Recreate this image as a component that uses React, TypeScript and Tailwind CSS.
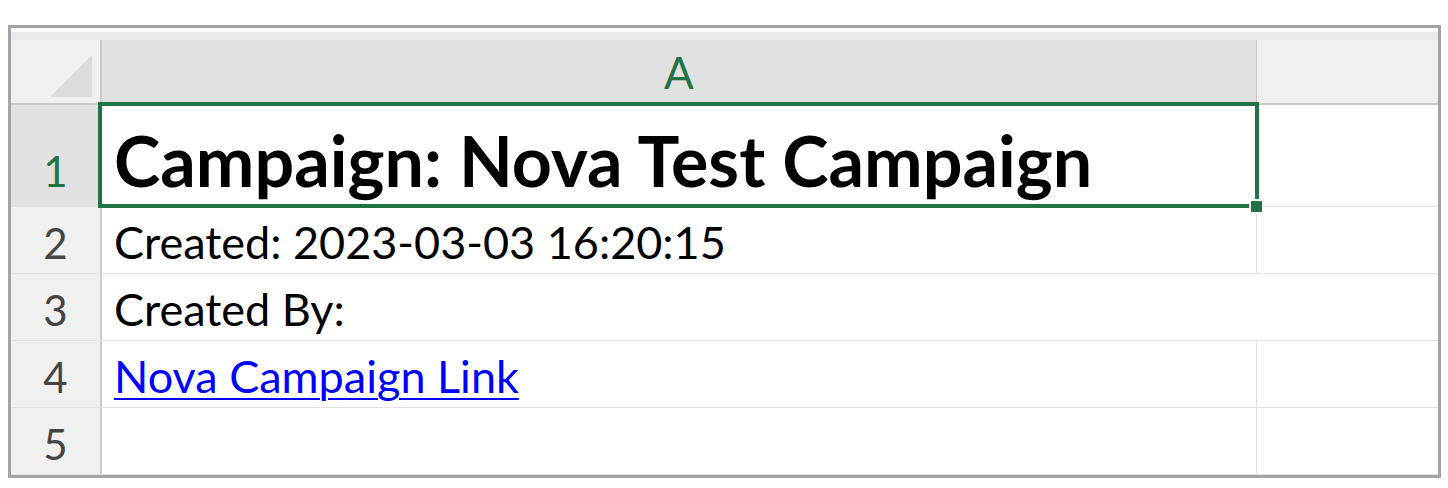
import React from 'react';

const font = { fontFamily: 'Lato, "Open Sans", sans-serif' };

type Row = {
    num: string;
    text?: string;
    link?: boolean;
    noSplit?: boolean;
};

const rows: Row[] = [
    { num: '2', text: 'Created: 2023-03-03 16:20:15' },
    { num: '3', text: 'Created By:', noSplit: true },
    { num: '4', text: 'Nova Campaign Link', link: true },
    { num: '5' },
];

const App: React.FC = () => {
    return (
        <div className="w-[1448px] h-[488px] bg-white pt-[25px] pl-[8px]" style={font}>
            <div className="w-[1433px] h-[453px] border-[3px] border-[#a3a3a3] bg-white overflow-hidden">
                {/* top strip */}
                <div className="h-[4px] bg-white" />
                <div className="h-[8px] bg-[#e8eaee]" />

                {/* column headers */}
                <div className="flex h-[65px]">
                    <div className="w-[91px] bg-[#f0f0f0] border-r-2 border-b-2 border-[#cacaca] flex items-end justify-end pr-[8px] pb-[6px]">
                        <svg width="42" height="42" viewBox="0 0 42 42">
                            <polygon points="42,0 42,42 0,42" fill="#dcdcdc" />
                        </svg>
                    </div>
                    <div className="w-[1155px] bg-[#e1e1e1] border-r border-[#c8c8c8] border-b-[3px] border-b-[#217346] flex items-end justify-center pb-[8px]">
                        <span className="text-[44px] leading-none text-[#217346]">A</span>
                    </div>
                    <div className="flex-1 bg-[#f0f0f0] border-b-2 border-[#cacaca]" />
                </div>

                {/* row 1 */}
                <div className="flex h-[102px] border-b border-[#e1e1e1]">
                    <div className="w-[91px] bg-[#e1e1e1] border-r-2 border-[#cacaca] flex items-end justify-center pb-[14px]">
                        <span className="text-[42px] leading-none text-[#217346]">1</span>
                    </div>
                    <div className="relative w-[1155px] border-r border-[#e1e1e1] flex items-end pl-[12px] pb-[11px]">
                        <span className="text-[70px] font-bold leading-none text-black whitespace-nowrap">Campaign: Nova Test Campaign</span>
                        <div className="absolute -left-[4px] -top-[3px] -right-[3px] -bottom-[2px] border-[4px] border-[#217346]" />
                        <div className="absolute -right-[8px] -bottom-[8px] w-[15px] h-[15px] bg-[#217346] border-2 border-white" />
                    </div>
                    <div className="flex-1" />
                </div>

                {/* rows 2-5 */}
                {rows.map((r) => (
                    <div key={r.num} className="flex h-[67px] border-b border-[#e1e1e1]">
                        <div className="w-[91px] bg-[#f0f0f0] border-r-2 border-[#cacaca] flex items-end justify-center pb-[9px]">
                            <span className="text-[42px] leading-none text-[#444444]">{r.num}</span>
                        </div>
                        <div
                            className={`w-[1155px] flex items-end pl-[12px] pb-[8px] ${r.noSplit ? '' : 'border-r border-[#e1e1e1]'}`}
                        >
                            {r.text && (
                                <span
                                    className={`text-[45px] leading-none whitespace-nowrap ${r.link ? 'text-[#0000ff] underline decoration-2 underline-offset-[5px]' : 'text-black'}`}
                                >
                                    {r.text}
                                </span>
                            )}
                        </div>
                        <div className="flex-1" />
                    </div>
                ))}
            </div>
        </div>
    );
};

export default App;
